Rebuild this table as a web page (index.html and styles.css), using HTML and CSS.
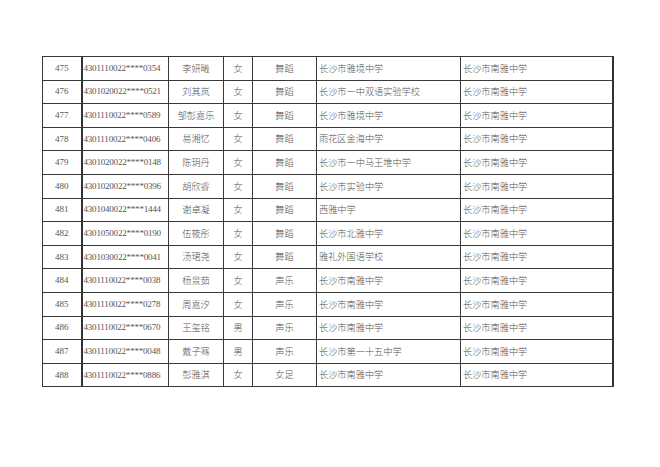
FILE: index.html
```html
<!DOCTYPE html>
<html lang="zh">
<head>
<meta charset="utf-8">
<link rel="stylesheet" href="styles.css">
</head>
<body>
<div class="page">
<table class="list">
<colgroup>
<col class="c-no"><col class="c-id"><col class="c-name"><col class="c-sex"><col class="c-item"><col class="c-from"><col class="c-to">
</colgroup>
<tbody>
<tr><td class="ctr num">475</td><td class="num id">4301110022****0354</td><td class="ctr">李妍曦</td><td class="ctr">女</td><td class="ctr">舞蹈</td><td>长沙市雅境中学</td><td class="last">长沙市南雅中学</td></tr>
<tr><td class="ctr num">476</td><td class="num id">4301020022****0521</td><td class="ctr">刘其岚</td><td class="ctr">女</td><td class="ctr">舞蹈</td><td>长沙市一中双语实验学校</td><td class="last">长沙市南雅中学</td></tr>
<tr><td class="ctr num">477</td><td class="num id">4301110022****0589</td><td class="ctr">邹彭嘉乐</td><td class="ctr">女</td><td class="ctr">舞蹈</td><td>长沙市雅境中学</td><td class="last">长沙市南雅中学</td></tr>
<tr><td class="ctr num">478</td><td class="num id">4301110022****0406</td><td class="ctr">易湘忆</td><td class="ctr">女</td><td class="ctr">舞蹈</td><td>雨花区金海中学</td><td class="last">长沙市南雅中学</td></tr>
<tr><td class="ctr num">479</td><td class="num id">4301020022****0148</td><td class="ctr">陈玥丹</td><td class="ctr">女</td><td class="ctr">舞蹈</td><td>长沙市一中马王堆中学</td><td class="last">长沙市南雅中学</td></tr>
<tr><td class="ctr num">480</td><td class="num id">4301020022****0396</td><td class="ctr">胡欣睿</td><td class="ctr">女</td><td class="ctr">舞蹈</td><td>长沙市实验中学</td><td class="last">长沙市南雅中学</td></tr>
<tr><td class="ctr num">481</td><td class="num id">4301040022****1444</td><td class="ctr">谢卓凝</td><td class="ctr">女</td><td class="ctr">舞蹈</td><td>西雅中学</td><td class="last">长沙市南雅中学</td></tr>
<tr><td class="ctr num">482</td><td class="num id">4301050022****0190</td><td class="ctr">伍筱彤</td><td class="ctr">女</td><td class="ctr">舞蹈</td><td>长沙市北雅中学</td><td class="last">长沙市南雅中学</td></tr>
<tr><td class="ctr num">483</td><td class="num id">4301030022****0041</td><td class="ctr">汤珺尧</td><td class="ctr">女</td><td class="ctr">舞蹈</td><td>雅礼外国语学校</td><td class="last">长沙市南雅中学</td></tr>
<tr><td class="ctr num">484</td><td class="num id">4301110022****0038</td><td class="ctr">杨景茹</td><td class="ctr">女</td><td class="ctr">声乐</td><td>长沙市南雅中学</td><td class="last">长沙市南雅中学</td></tr>
<tr><td class="ctr num">485</td><td class="num id">4301110022****0278</td><td class="ctr">周嘉汐</td><td class="ctr">女</td><td class="ctr">声乐</td><td>长沙市南雅中学</td><td class="last">长沙市南雅中学</td></tr>
<tr><td class="ctr num">486</td><td class="num id">4301110022****0670</td><td class="ctr">王玺铭</td><td class="ctr">男</td><td class="ctr">声乐</td><td>长沙市南雅中学</td><td class="last">长沙市南雅中学</td></tr>
<tr><td class="ctr num">487</td><td class="num id">4301110022****0048</td><td class="ctr">戴子骞</td><td class="ctr">男</td><td class="ctr">声乐</td><td>长沙市第一十五中学</td><td class="last">长沙市南雅中学</td></tr>
<tr><td class="ctr num">488</td><td class="num id">4301110022****0886</td><td class="ctr">彭雅淇</td><td class="ctr">女</td><td class="ctr">女足</td><td>长沙市南雅中学</td><td class="last">长沙市南雅中学</td></tr>
</tbody>
</table>
</div>
</body>
</html>
```

FILE: styles.css
```css
html, body {
  margin: 0;
  padding: 0;
  background: #ffffff;
}
.page {
  padding: 56px 0 0 42px;
}
.list {
  border-collapse: collapse;
  table-layout: fixed;
  width: 570px;
  font-family: "Liberation Serif", "Noto Sans CJK SC", serif;
  color: #555;
  font-size: 9px;
  border-right: 2px solid #333;
  border-bottom: 1.5px solid #333;
}
.c-no { width: 39px; }
.c-id { width: 87px; }
.c-name { width: 55px; }
.c-sex { width: 29px; }
.c-item { width: 64px; }
.c-from { width: 144px; }
.c-to { width: 152px; }
.list td {
  height: 23.6px;
  padding: 0 0 0 2px;
  border: 1px solid #3a3a3a;
  border-top-width: 1.5px;
  white-space: nowrap;
  overflow: hidden;
  font-family: "Noto Sans CJK SC", sans-serif;
  font-size: 9.2px;
  font-weight: 300;
  line-height: 1;
  box-sizing: border-box;
}
.list td.num {
  font-family: "Liberation Serif", serif;
  font-size: 9px;
  font-weight: 400;
}
.list td.id {
  border-left: 2px solid #333;
  padding-left: 1px;
  letter-spacing: -0.2px;
}
.list td.ctr {
  text-align: center;
  padding: 0;
}
```
